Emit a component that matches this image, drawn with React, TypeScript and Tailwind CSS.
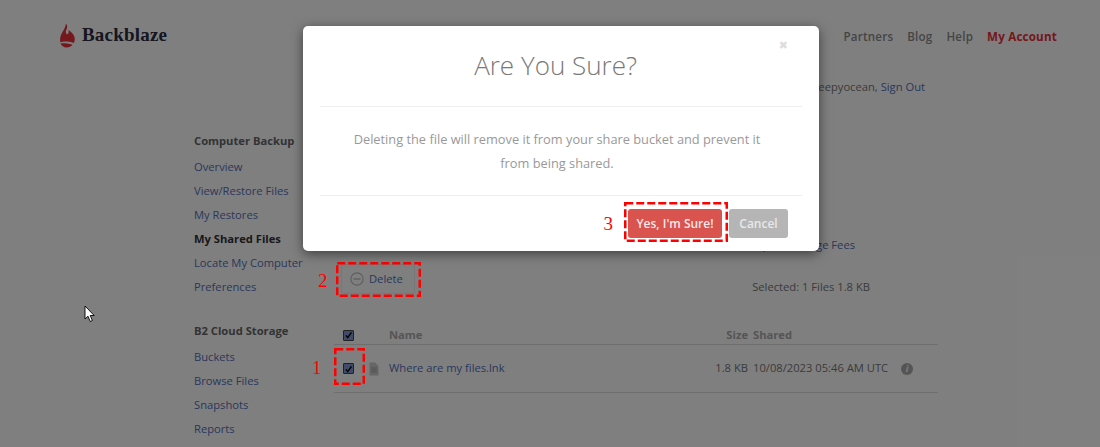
import React from "react";

const computerLinks = ["Overview", "View/Restore Files", "My Restores", "My Shared Files", "Locate My Computer", "Preferences"];
const cloudLinks = ["Buckets", "Browse Files", "Snapshots", "Reports"];

const Check = () => (
  <span className="flex items-center justify-center w-[11px] h-[11px] bg-[#7f97d0] border border-[#444] rounded-[1px]">
    <svg viewBox="0 0 12 12" className="w-[10px] h-[10px]">
      <path d="M2.5 6.5 L5 9.5 L10 2.5" fill="none" stroke="#000" strokeWidth="2" />
    </svg>
  </span>
);

const DashBox = ({ className, w, h }: { className: string; w: number; h: number }) => (
  <svg className={className} width={w} height={h}>
    <rect x="1.25" y="1.25" width={w - 2.5} height={h - 2.5} fill="none" stroke="#f00" strokeWidth="2.5" strokeDasharray="8 3" />
  </svg>
);

const App = () => {
  return (
    <div className="relative w-[1100px] h-[447px] overflow-hidden bg-white font-['Open_Sans',sans-serif] text-[11.2px] text-[#777]">
      <header className="flex items-center justify-between h-[73px] pl-[60px] pr-[43px]">
        <div className="flex items-center gap-[7px] mb-[2px]">
          <svg viewBox="0 0 15 25" className="w-[15px] h-[25px]">
            <path
              d="M6 0.5 C7.5 2.5 7.5 4.5 6.5 6.5 C5.5 8.5 5.5 10 7 11.5 C8.5 10.5 9 9 8.5 7 C11.5 9 14.8 12 14.8 16 C14.8 17.5 14.5 18.8 13.8 20 C11 18.8 8 18.5 5.5 18.5 C3.5 18.5 1.5 18.8 0.4 19.2 C-0.1 17 0 14.5 1 12 C2.5 8.5 5.5 5 6 0.5 Z"
              fill="#e8303a"
            />
            <path d="M0.5 20.6 C3 20 7 20 10 21 L12.6 21.8 C11 23.6 9 24.6 6.8 24.6 C3.5 24.6 1.5 22.8 0.5 20.6 Z" fill="#e8303a" />
          </svg>
          <span className="font-['Liberation_Serif',serif] font-bold text-[19px] tracking-[0.2px] text-[#2c2c40]">Backblaze</span>
        </div>
        <nav className="flex items-center gap-[14px] text-[11.6px] font-semibold tracking-[0.2px]">
          <a className="text-[#8a8a8a]">Partners</a>
          <a className="text-[#8a8a8a]">Blog</a>
          <a className="text-[#8a8a8a]">Help</a>
          <a className="text-[#e8303a] font-bold">My Account</a>
        </nav>
      </header>

      <div className="flex pl-[194px]">
        <aside className="w-[140px] pt-[59px]">
          <h3 className="h-[18px] leading-[18px] font-bold text-[#666]">Computer Backup</h3>
          <ul className="mt-[5px]">
            {computerLinks.map((l) => (
              <li key={l} className={l === "My Shared Files" ? "h-[24px] leading-[24px] font-bold text-[#333]" : "h-[24px] leading-[24px] text-[#5470b8]"}>
                {l}
              </li>
            ))}
          </ul>
          <h3 className="mt-[23px] h-[18px] leading-[18px] font-bold text-[#666]">B2 Cloud Storage</h3>
          <ul className="mt-[5px]">
            {cloudLinks.map((l) => (
              <li key={l} className="h-[24px] leading-[24px] text-[#5470b8]">{l}</li>
            ))}
          </ul>
        </aside>

        <main className="w-[604px]">
          <p className="mt-[5px] pr-[13px] text-right h-[18px] leading-[18px]">
            Welcome sleepyocean, <a className="text-[#5470b8]">Sign Out</a>
          </p>
          <p className="mt-[140px] pr-[83px] text-right h-[18px] leading-[18px] text-[#5470b8]">Caps &amp; Storage Fees</p>
          <div className="flex items-start justify-between mt-[10px] pl-[7px] pr-[68px] h-[32px]">
            <button className="flex items-center gap-[5px] w-[74px] h-[30px] pl-[8px] border border-[#eee] rounded-[3px] text-[#5470b8]">
              <svg viewBox="0 0 16 16" className="w-[14px] h-[14px]">
                <circle cx="8" cy="8" r="7" fill="none" stroke="#bbb" strokeWidth="1.3" />
                <path d="M4 8 H12" stroke="#bbb" strokeWidth="1.5" />
              </svg>
              Delete
            </button>
            <span className="mt-[14px] leading-[18px]">Selected: 1 Files 1.8 KB</span>
          </div>
          <div className="flex items-center h-[19px] mt-[30px] border-b border-[#ddd] font-bold text-[#aaa]">
            <span className="flex justify-center w-[28px]"><Check /></span>
            <span className="ml-[27px] w-[200px]">Name</span>
            <span className="w-[159px] text-right">Size</span>
            <span className="ml-[5px]">Shared</span>
          </div>
          <div className="flex items-center h-[48px] border-b border-[#ddd]">
            <span className="flex justify-center w-[28px]"><Check /></span>
            <svg viewBox="0 0 10 14" className="w-[10px] h-[14px] ml-[7px]">
              <path d="M0.5 0.5 H6 L9.5 4 V13.5 H0.5 Z" fill="#ccc" />
              <path d="M2 6 H8 M2 8 H8 M2 10 H8" stroke="#999" strokeWidth="0.8" />
            </svg>
            <span className="ml-[10px] w-[200px] text-[#5470b8]">Where are my files.lnk</span>
            <span className="w-[159px] text-right">1.8 KB</span>
            <span className="ml-[5px] w-[148px]">10/08/2023 05:46 AM UTC</span>
            <span className="flex items-center justify-center w-[12px] h-[12px] rounded-full bg-[#aaa] text-white text-[9px] font-bold italic">i</span>
          </div>
        </main>
      </div>

      <div className="absolute inset-0 bg-black/50" />

      <svg viewBox="0 0 12 18" className="absolute left-[84px] top-[305px] w-[12px] h-[18px]">
        <path d="M1 1 V14 L4 11.2 L6.2 16.5 L8.4 15.5 L6.2 10.5 H10.2 Z" fill="#fff" stroke="#000" strokeWidth="0.9" />
      </svg>

      <DashBox className="absolute left-[336px] top-[262px]" w={85} h={35} />
      <DashBox className="absolute left-[334px] top-[348px]" w={31} h={37} />
      <span className="absolute left-[312px] top-[357px] font-['Liberation_Serif',serif] text-[19px] leading-[22px] text-[#f00]">1</span>
      <span className="absolute left-[318px] top-[270px] font-['Liberation_Serif',serif] text-[19px] leading-[22px] text-[#f00]">2</span>

      <div className="absolute left-[303px] top-[26px] w-[516px] h-[225px] bg-white rounded-[5px] shadow-[0_3px_12px_rgba(0,0,0,0.5)]">
        <span className="absolute right-[31px] top-[10px] font-['DejaVu_Sans',sans-serif] text-[11px] leading-[20px] font-bold text-[#ddd]">✖</span>
        <div className="mx-[17px] flex flex-col h-full">
          <h2 className="h-[81px] pt-[22px] pr-[11px] text-center text-[26px] leading-[34px] font-light text-[#797979] border-b border-[#eee]">Are You Sure?</h2>
          <p className="h-[89px] pt-[21px] pl-[20px] pr-[28px] text-center text-[12.8px] leading-[23.5px] text-[#999] border-b border-[#eee]">
            Deleting the file will remove it from your share bucket and prevent it from being shared.
          </p>
          <div className="flex items-center justify-end gap-[7px] pt-[13px] pr-[14px]">
            <span className="mr-[8px] font-['Liberation_Serif',serif] text-[19px] leading-[22px] text-[#f00]">3</span>
            <span className="relative flex">
              <button className="w-[94px] h-[29px] rounded-[3px] bg-[#d9534f] text-[#f8e8e8] text-[12px] font-semibold">Yes, I'm Sure!</button>
              <DashBox className="absolute -left-[4px] -top-[7px]" w={104} h={40} />
            </span>
            <button className="w-[59px] h-[29px] rounded-[3px] bg-[#b5b5b5] text-[#e8e8e8] text-[12px] font-semibold">Cancel</button>
          </div>
        </div>
      </div>
    </div>
  );
};

export default App;
